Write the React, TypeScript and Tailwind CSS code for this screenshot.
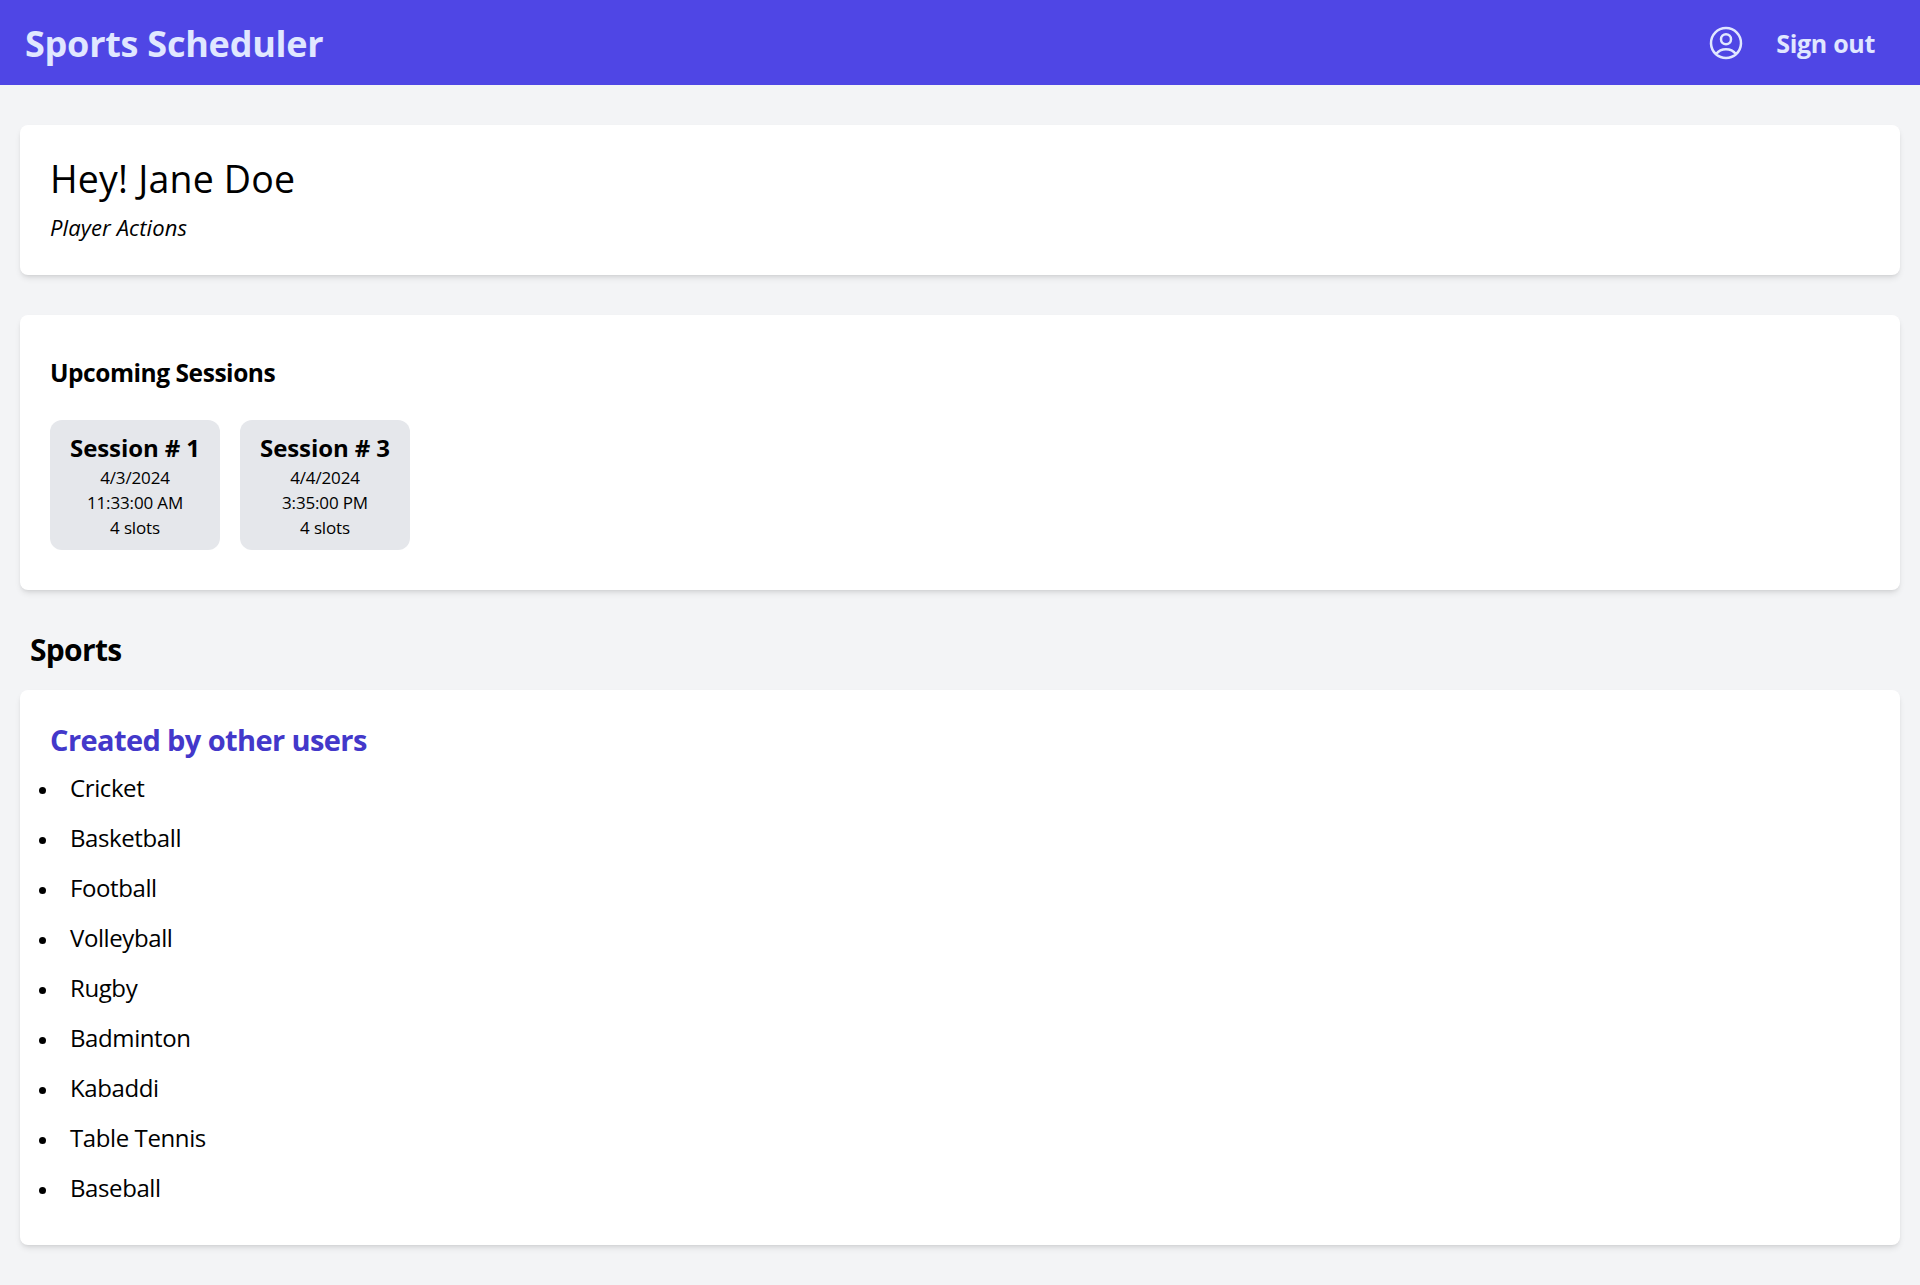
import React from "react";

const sessions = [
  { id: 1, date: "4/3/2024", time: "11:33:00 AM", slots: 4 },
  { id: 3, date: "4/4/2024", time: "3:35:00 PM", slots: 4 },
];

const sports = [
  "Cricket",
  "Basketball",
  "Football",
  "Volleyball",
  "Rugby",
  "Badminton",
  "Kabaddi",
  "Table Tennis",
  "Baseball",
];

function UserCircle() {
  return (
    <svg
      xmlns="http://www.w3.org/2000/svg"
      fill="none"
      viewBox="0 0 24 24"
      strokeWidth={1.5}
      stroke="currentColor"
      className="w-10 h-10"
    >
      <path
        strokeLinecap="round"
        strokeLinejoin="round"
        d="M17.982 18.725A7.488 7.488 0 0 0 12 15.75a7.488 7.488 0 0 0-5.982 2.975m11.964 0a9 9 0 1 0-11.963 0m11.963 0A8.966 8.966 0 0 1 12 21a8.966 8.966 0 0 1-5.982-2.275M15 9.75a3 3 0 1 1-6 0 3 3 0 0 1 6 0Z"
      />
    </svg>
  );
}

export default function App() {
  return (
    <div className="min-h-[1285px] bg-[#f3f4f6] text-black font-['Open_Sans',sans-serif]">
      <nav className="h-[85px] bg-[#4f46e5] flex items-center justify-between pl-[25px] pr-[45px] text-[#e0e7ff]">
        <h1 className="pt-[2px] text-[36px] font-bold tracking-[-0.25px]">Sports Scheduler</h1>
        <div className="flex items-center gap-[30px]">
          <UserCircle />
          <button className="pt-[2px] text-[25px] font-bold tracking-[-0.3px]">Sign out</button>
        </div>
      </nav>

      <main className="px-5 pt-10 pb-10">
        <section className="h-[150px] bg-white rounded-lg shadow-md px-[30px] pt-[31px]">
          <h2 className="text-[37.5px] leading-[45px] tracking-[0.2px]">Hey! Jane Doe</h2>
          <p className="mt-[11px] text-[22px] leading-[30px] italic tracking-[0.1px]">Player Actions</p>
        </section>

        <section className="mt-10 h-[275px] bg-white rounded-lg shadow-md p-[30px]">
          <h3 className="mt-[13px] text-[24.5px] leading-[30px] font-bold tracking-[-0.45px]">Upcoming Sessions</h3>
          <div className="mt-[32px] flex gap-5">
            {sessions.map((s) => (
              <div key={s.id} className="w-[170px] h-[130px] bg-[#e5e7eb] rounded-xl pt-[10px] text-center">
                <h4 className="text-[24px] leading-[35px] font-bold tracking-[-0.1px]">Session # {s.id}</h4>
                <p className="text-[17px] leading-[25px] tracking-[-0.15px]">{s.date}</p>
                <p className="text-[17px] leading-[25px] tracking-[-0.15px]">{s.time}</p>
                <p className="text-[17px] leading-[25px] tracking-[-0.15px]">{s.slots} slots</p>
              </div>
            ))}
          </div>
        </section>

        <h2 className="mt-[40px] ml-[10px] text-[30px] leading-[40px] font-bold tracking-[-0.7px]">Sports</h2>

        <section className="mt-5 h-[555px] bg-white rounded-lg shadow-md pt-[30px]">
          <h3 className="ml-[30px] text-[29px] leading-[40px] font-bold tracking-[-0.6px] text-[#4338ca]">Created by other users</h3>
          <ul className="mt-[3px] pl-[19px]">
            {sports.map((name) => (
              <li key={name} className="flex items-center h-[50px] text-[24px] leading-[50px] tracking-[-0.4px]">
                <span className="mt-[5px] mr-[24px] w-[7px] h-[7px] rounded-full bg-black" />
                {name}
              </li>
            ))}
          </ul>
        </section>
      </main>
    </div>
  );
}
